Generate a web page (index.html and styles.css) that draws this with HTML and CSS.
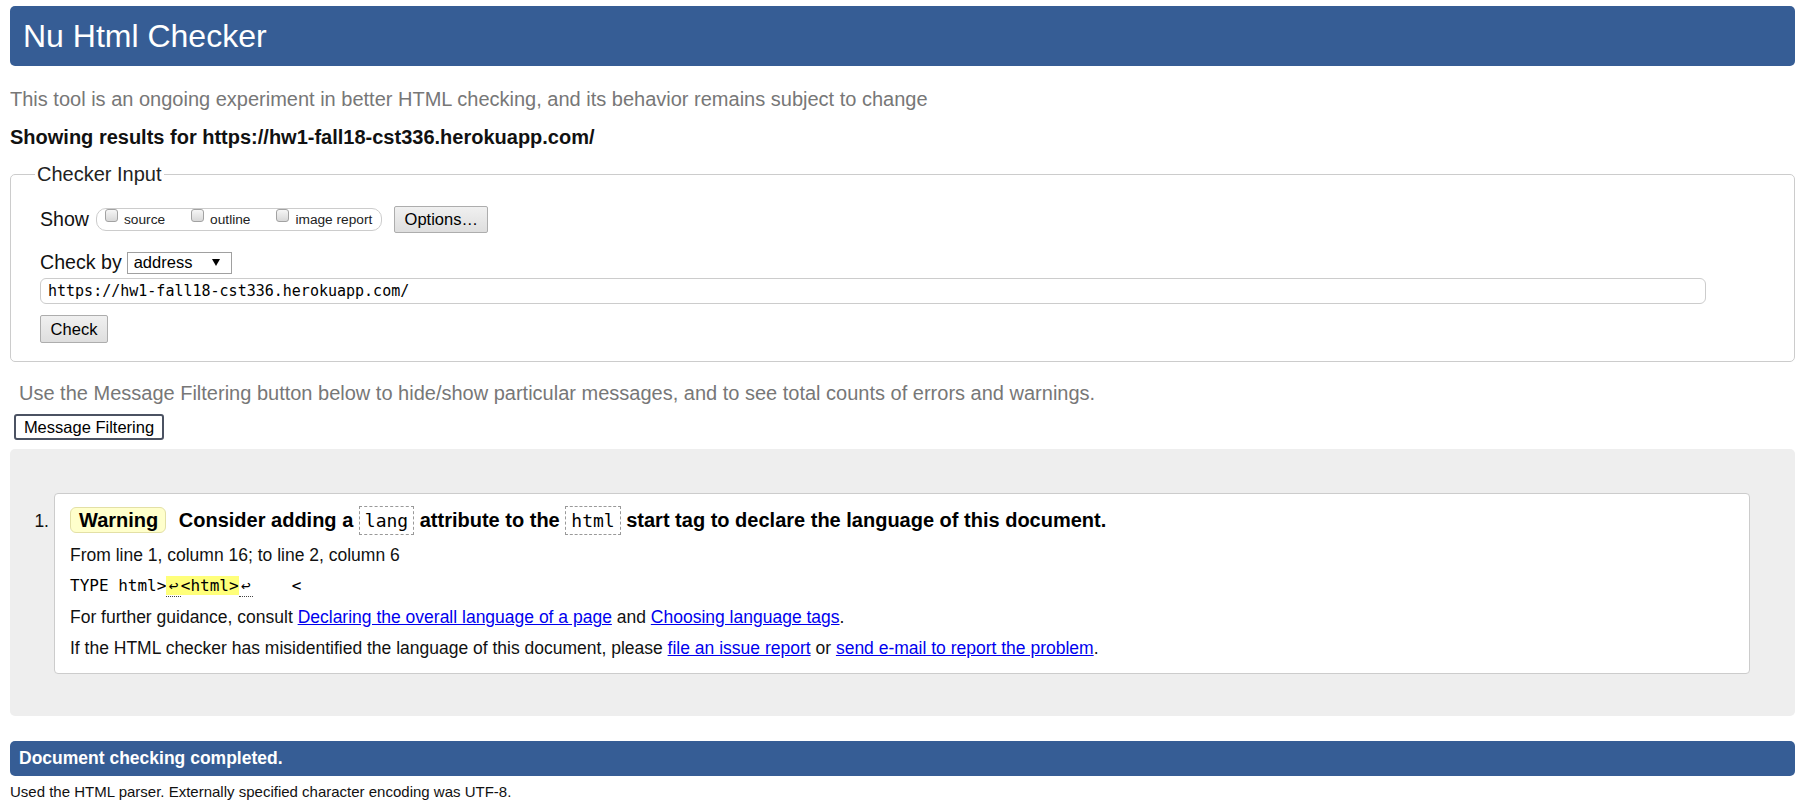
FILE: index.html
```html
<!DOCTYPE html>
<html lang="en">
<head>
<meta charset="utf-8">
<title>Nu Html Checker</title>
<link rel="stylesheet" href="styles.css">
</head>
<body>
<h1 class="title">Nu Html Checker</h1>
<p class="tagline">This tool is an ongoing experiment in better HTML checking, and its behavior remains subject to change</p>
<p class="showing">Showing results for https://hw1-fall18-cst336.herokuapp.com/</p>

<fieldset class="checker">
  <legend class="legend">Checker Input</legend>
  <div class="row show-row">
    <span class="lbl">Show</span>
    <span class="pill">
      <label class="opt"><span class="cb"></span>source</label>
      <label class="opt"><span class="cb"></span>outline</label>
      <label class="opt"><span class="cb"></span>image report</label>
    </span>
    <span class="btn options">Options…</span>
  </div>
  <div class="row by-row">
    <span class="lbl">Check by</span>
    <span class="select">address<svg class="arrow" width="8" height="7" viewBox="0 0 8 7"><path d="M0 0H8L4 7Z" fill="#000"/></svg></span>
  </div>
  <div class="url">https://hw1-fall18-cst336.herokuapp.com/</div>
  <span class="btn check">Check</span>
</fieldset>

<p class="hint">Use the Message Filtering button below to hide/show particular messages, and to see total counts of errors and warnings.</p>
<span class="filter">Message Filtering</span>

<div class="results">
  <ol class="messages">
    <li class="item">
      <span class="num">1.</span>
      <div class="msg">
        <p class="head"><span class="badge">Warning</span> Consider adding a <code class="tok">lang</code> attribute to the <code class="tok">html</code> start tag to declare the language of this document.</p>
        <p class="line">From line 1, column 16; to line 2, column 6</p>
        <p class="line extract"><code class="src">TYPE html&gt;<mark class="hl"><span class="lf">↩</span>&lt;html&gt;</mark><span class="lf">↩</span>    &lt;</code></p>
        <p class="line">For further guidance, consult <a href="#">Declaring the overall language of a page</a> and <a href="#">Choosing language tags</a>.</p>
        <p class="line">If the HTML checker has misidentified the language of this document, please <a href="#">file an issue report</a> or <a href="#">send e-mail to report the problem</a>.</p>
      </div>
    </li>
  </ol>
</div>

<div class="done">Document checking completed.</div>
<p class="parser">Used the HTML parser. Externally specified character encoding was UTF-8.</p>
</body>
</html>
```

FILE: styles.css
```css
html, body {
  background: #fff;
}

body {
  margin: 6px 7px 0 10px;
  font-family: "Liberation Sans", Arial, sans-serif;
  font-size: 20px;
  color: #111;
}

.title {
  margin: 0;
  height: 60px;
  line-height: 60px;
  padding-left: 13px;
  background: #365d95;
  color: #fff;
  border-radius: 5px;
  font-size: 32px;
  font-weight: normal;
}

.tagline {
  margin: 22px 0 0 0;
  color: #777;
  line-height: 23px;
}

.showing {
  margin: 15px 0 0 0;
  font-weight: bold;
  line-height: 23px;
}

.checker {
  margin: 14px 0 0 0;
  padding: 20px 29px 18px 29px;
  border: 1px solid #ccc;
  border-radius: 5px;
  min-width: 0;
}

.legend {
  margin-left: -5px;
  padding: 0 2px;
  font-size: 20px;
  line-height: 23px;
  color: #222;
}

.row {
  display: flex;
  align-items: center;
}

.lbl {
  font-size: 19.6px;
  line-height: 23px;
  color: #111;
}

.show-row .lbl {
  margin-right: 7px;
}

.pill {
  display: flex;
  align-items: center;
  box-sizing: border-box;
  height: 23px;
  padding: 0 9px 0 8px;
  border: 1px solid #ccc;
  border-radius: 10px;
  margin-right: 12px;
}

.opt {
  font-size: 13.7px;
  line-height: 21px;
  color: #222;
  margin-right: 26px;
}

.opt:last-child {
  margin-right: 0;
}

.cb {
  display: inline-block;
  box-sizing: border-box;
  width: 13px;
  height: 13px;
  margin-right: 6px;
  vertical-align: 2px;
  border: 1px solid #a2a2a2;
  border-radius: 3px;
  background: linear-gradient(#f6f6f6, #d8d8d8);
}

.btn {
  display: inline-block;
  box-sizing: border-box;
  height: 27px;
  line-height: 25px;
  padding: 0 9px;
  font-size: 16.5px;
  color: #000;
  border: 1px solid #adadad;
  border-radius: 2px;
  background: linear-gradient(#f0f0f0, #dedede);
}

.options {
  width: 94px;
  text-align: center;
  padding: 0;
}

.by-row {
  margin-top: 18px;
}

.by-row .lbl {
  margin-right: 5px;
}

.select {
  display: inline-flex;
  align-items: center;
  justify-content: space-between;
  box-sizing: border-box;
  width: 105px;
  height: 22px;
  padding: 0 11px 0 6px;
  border: 1px solid #a0a0a0;
  background: #fff;
  font-size: 16.5px;
  color: #000;
}

.arrow {
  display: block;
}

.url {
  box-sizing: border-box;
  width: 96.6%;
  height: 26px;
  margin-top: 4px;
  padding: 0 7px;
  border: 1px solid #ccc;
  border-radius: 6px;
  font-family: "DejaVu Sans Mono", "Liberation Mono", monospace;
  font-size: 15px;
  line-height: 24px;
  color: #000;
}

.check {
  margin-top: 11px;
  width: 68px;
  text-align: center;
  padding: 0;
  height: 28px;
  line-height: 26px;
}

.hint {
  margin: 20px 0 0 9px;
  color: #777;
  line-height: 23px;
}

.filter {
  display: inline-block;
  box-sizing: border-box;
  margin: 9px 0 0 4px;
  height: 26px;
  width: 150px;
  line-height: 22px;
  text-align: center;
  font-size: 16.5px;
  color: #000;
  background: #fff;
  border: 2px solid #4b5262;
  border-radius: 3px;
}

.results {
  margin-top: 9px;
  padding: 44px 45px 42px 0;
  background: #eee;
  border-radius: 5px;
}

.messages {
  list-style: none;
  margin: 0;
  padding: 0;
}

.item {
  display: flex;
  align-items: baseline;
}

.num {
  flex: 0 0 44px;
  box-sizing: border-box;
  padding-right: 5px;
  text-align: right;
  font-size: 17.5px;
  color: #111;
}

.msg {
  flex: 1;
  min-width: 0;
  padding: 11px 15px 9px 15px;
  background: #fff;
  border: 1px solid #ccc;
  border-radius: 4px;
}

.msg p {
  margin: 0;
}

.msg .head {
  font-weight: bold;
  line-height: 30px;
  margin-bottom: 3.5px;
  color: #000;
}

.badge {
  display: inline-block;
  line-height: 24px;
  padding: 0 7px 0 8px;
  margin-right: 7px;
  background: #ffffcc;
  border: 1px solid #e3e0a6;
  border-radius: 6px;
}

.tok {
  font-family: "DejaVu Sans Mono", "Liberation Mono", monospace;
  font-weight: normal;
  font-size: 18px;
  padding: 3px 5px;
  border: 1px dashed #999;
}

.line {
  font-size: 17.5px;
  line-height: 30.8px;
  color: #111;
}

.src {
  font-family: "DejaVu Sans Mono", "Liberation Mono", monospace;
  font-size: 16px;
  white-space: pre;
  color: #000;
}

.hl {
  background: #ffff7a;
  color: #000;
}

.lf {
  display: inline-block;
  width: 14.5px;
  line-height: 18.6px;
  text-align: center;
  border-bottom: 1px dotted #444;
}

.line a {
  color: #0000ee;
  text-decoration: underline;
}

.done {
  margin-top: 25px;
  height: 35px;
  line-height: 35px;
  padding-left: 9px;
  background: #365d95;
  color: #fff;
  font-weight: bold;
  font-size: 17.5px;
  border-radius: 5px;
}

.parser {
  margin: 7px 0 0 0;
  font-size: 15px;
  color: #111;
}
```
